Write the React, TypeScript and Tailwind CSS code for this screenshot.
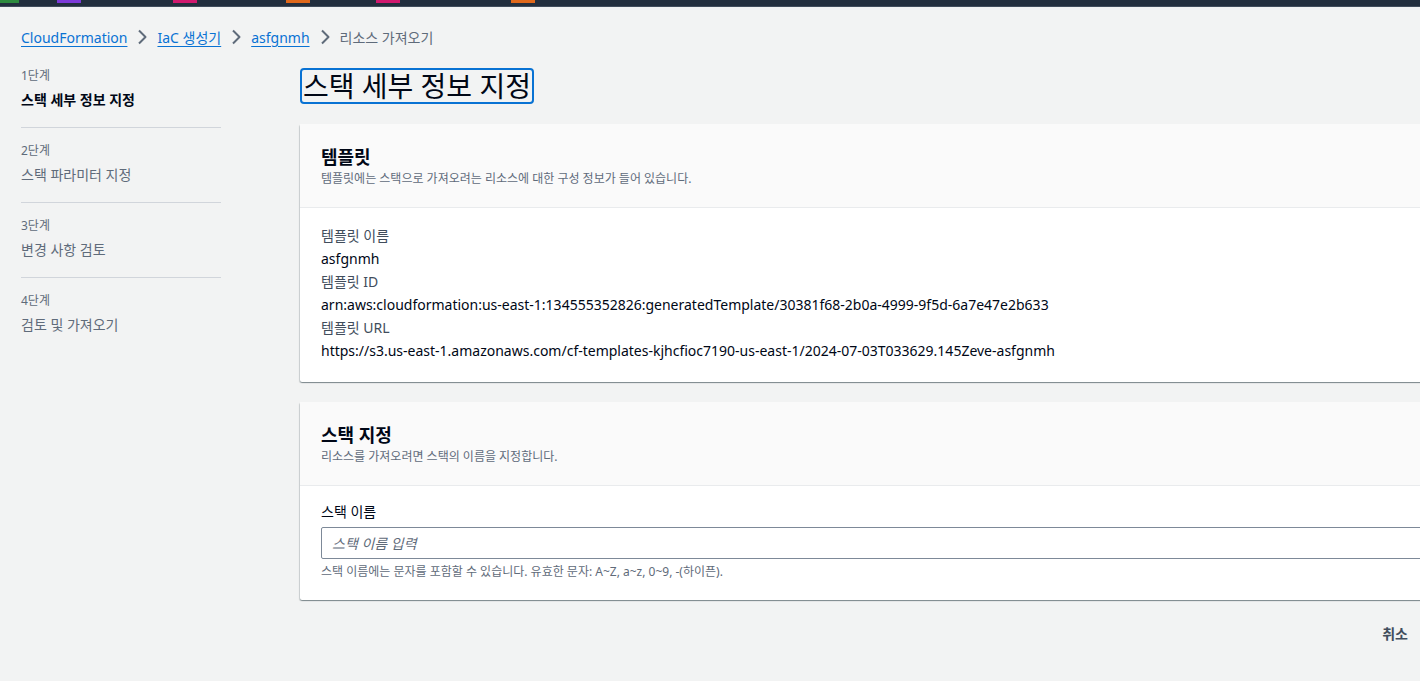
const font = { fontFamily: '"Noto Sans", "Noto Sans CJK KR", sans-serif' };

const steps = [
  { num: "1단계", label: "스택 세부 정보 지정", active: true },
  { num: "2단계", label: "스택 파라미터 지정" },
  { num: "3단계", label: "변경 사항 검토" },
  { num: "4단계", label: "검토 및 가져오기" },
];

function Chevron() {
  return (
    <svg className="mx-[7px] h-4 w-4 text-[#5f6b7a]" fill="none" viewBox="0 0 16 16">
      <path d="M5 1.5l6.5 6.5-6.5 6.5" stroke="currentColor" strokeWidth="2" strokeLinejoin="round" />
    </svg>
  );
}

function TopBar() {
  const marks = [
    { left: "left-0", w: "w-[19px]", c: "bg-[#2e8b3e]" },
    { left: "left-[57px]", w: "w-[24px]", c: "bg-[#7d3ad8]" },
    { left: "left-[173px]", w: "w-[24px]", c: "bg-[#d1196e]" },
    { left: "left-[286px]", w: "w-[24px]", c: "bg-[#e0681a]" },
    { left: "left-[376px]", w: "w-[24px]", c: "bg-[#d1196e]" },
    { left: "left-[511px]", w: "w-[24px]", c: "bg-[#e0681a]" },
  ];
  return (
    <div className="relative h-[7px] border-b border-[#414d5c] bg-[#232f3e]">
      {marks.map((m, i) => (
        <span className={`absolute top-0 h-[3px] ${m.left} ${m.w} ${m.c}`} key={i} />
      ))}
    </div>
  );
}

function Field({ label, value }: { label: string; value: string }) {
  return (
    <>
      <div className="text-[14px] leading-[23px] text-[#414d5c]">{label}</div>
      <div className="text-[14px] leading-[23px] text-[#000716]">{value}</div>
    </>
  );
}

function CardHeader({ title, desc }: { title: string; desc: string }) {
  return (
    <div className="border-b border-[#e9ebed] bg-[#fafafa] px-[21px] pb-[19px] pt-[22px]">
      <h2 className="text-[18px] leading-[22px] font-bold text-[#000716]">{title}</h2>
      <p className="mt-[2px] text-[12px] leading-[18px] text-[#5f6b7a]">{desc}</p>
    </div>
  );
}

const cardShadow =
  "rounded-[2px] bg-white shadow-[0_1px_1px_rgba(0,28,36,0.3),1px_1px_1px_rgba(0,28,36,0.15),-1px_1px_1px_rgba(0,28,36,0.15)]";

export default function App() {
  return (
    <div className="h-[681px] w-full overflow-hidden bg-[#f2f3f3]" style={font}>
      <TopBar />

      <nav className="flex h-[46px] items-center pl-[21px] pt-[14px] text-[14px]">
        <a className="text-[#0972d3] underline underline-offset-[3px]" href="#">CloudFormation</a>
        <Chevron />
        <a className="text-[#0972d3] underline underline-offset-[3px]" href="#">IaC 생성기</a>
        <Chevron />
        <a className="text-[#0972d3] underline underline-offset-[3px]" href="#">asfgnmh</a>
        <Chevron />
        <span className="text-[#5f6b7a]">리소스 가져오기</span>
      </nav>

      <div className="flex gap-[79px] pl-[21px]">
        <aside className="w-[200px] shrink-0 pt-[15px]">
          {steps.map((s, i) => (
            <div
              className={`pb-[17px] ${i < steps.length - 1 ? "border-b border-[#d1d5db]" : ""} ${i === 0 ? "pt-0" : "pt-[15px]"}`}
              key={s.num}
            >
              <div className="text-[12px] leading-[16px] text-[#5f6b7a]">{s.num}</div>
              <div
                className={`mt-[6px] text-[14px] leading-[20px] ${
                  s.active ? "font-bold text-[#000716]" : "text-[#5f6b7a]"
                }`}
              >
                {s.label}
              </div>
            </div>
          ))}
        </aside>

        <main className="w-[1180px] shrink-0 pt-[15px]">
          <h1 className="inline-block rounded-[4px] border-2 border-[#0972d3] px-[1px] text-[28px] leading-[32px] font-normal text-[#000716]">
            스택 세부 정보 지정
          </h1>

          <section className={`mt-[20px] ${cardShadow}`}>
            <CardHeader
              title="템플릿"
              desc="템플릿에는 스택으로 가져오려는 리소스에 대한 구성 정보가 들어 있습니다."
            />
            <div className="px-[21px] pb-[20px] pt-[16px]">
              <Field label="템플릿 이름" value="asfgnmh" />
              <Field
                label="템플릿 ID"
                value="arn:aws:cloudformation:us-east-1:134555352826:generatedTemplate/30381f68-2b0a-4999-9f5d-6a7e47e2b633"
              />
              <Field
                label="템플릿 URL"
                value="https://s3.us-east-1.amazonaws.com/cf-templates-kjhcfioc7190-us-east-1/2024-07-03T033629.145Zeve-asfgnmh"
              />
            </div>
          </section>

          <section className={`mt-[20px] ${cardShadow}`}>
            <CardHeader title="스택 지정" desc="리소스를 가져오려면 스택의 이름을 지정합니다." />
            <div className="px-[21px] pb-[20px] pt-[15px]">
              <label className="block text-[14px] leading-[22px] text-[#000716]">스택 이름</label>
              <input
                className="mt-[4px] h-[32px] w-full rounded-[2px] border border-[#7d8998] px-[10px] text-[14px] text-[#000716] outline-none placeholder:italic placeholder:text-[#5f6b7a]"
                placeholder="스택 이름 입력"
                style={font}
                type="text"
              />
              <p className="mt-[5px] text-[12px] leading-[16px] text-[#5f6b7a]">
                스택 이름에는 문자를 포함할 수 있습니다. 유효한 문자: A~Z, a~z, 0~9, -(하이픈).
              </p>
            </div>
          </section>
        </main>
      </div>

      <div className="flex justify-end pr-[12px] pt-[23px]">
        <button className="text-[14px] font-bold text-[#414d5c]" style={font} type="button">
          취소
        </button>
      </div>
    </div>
  );
}
